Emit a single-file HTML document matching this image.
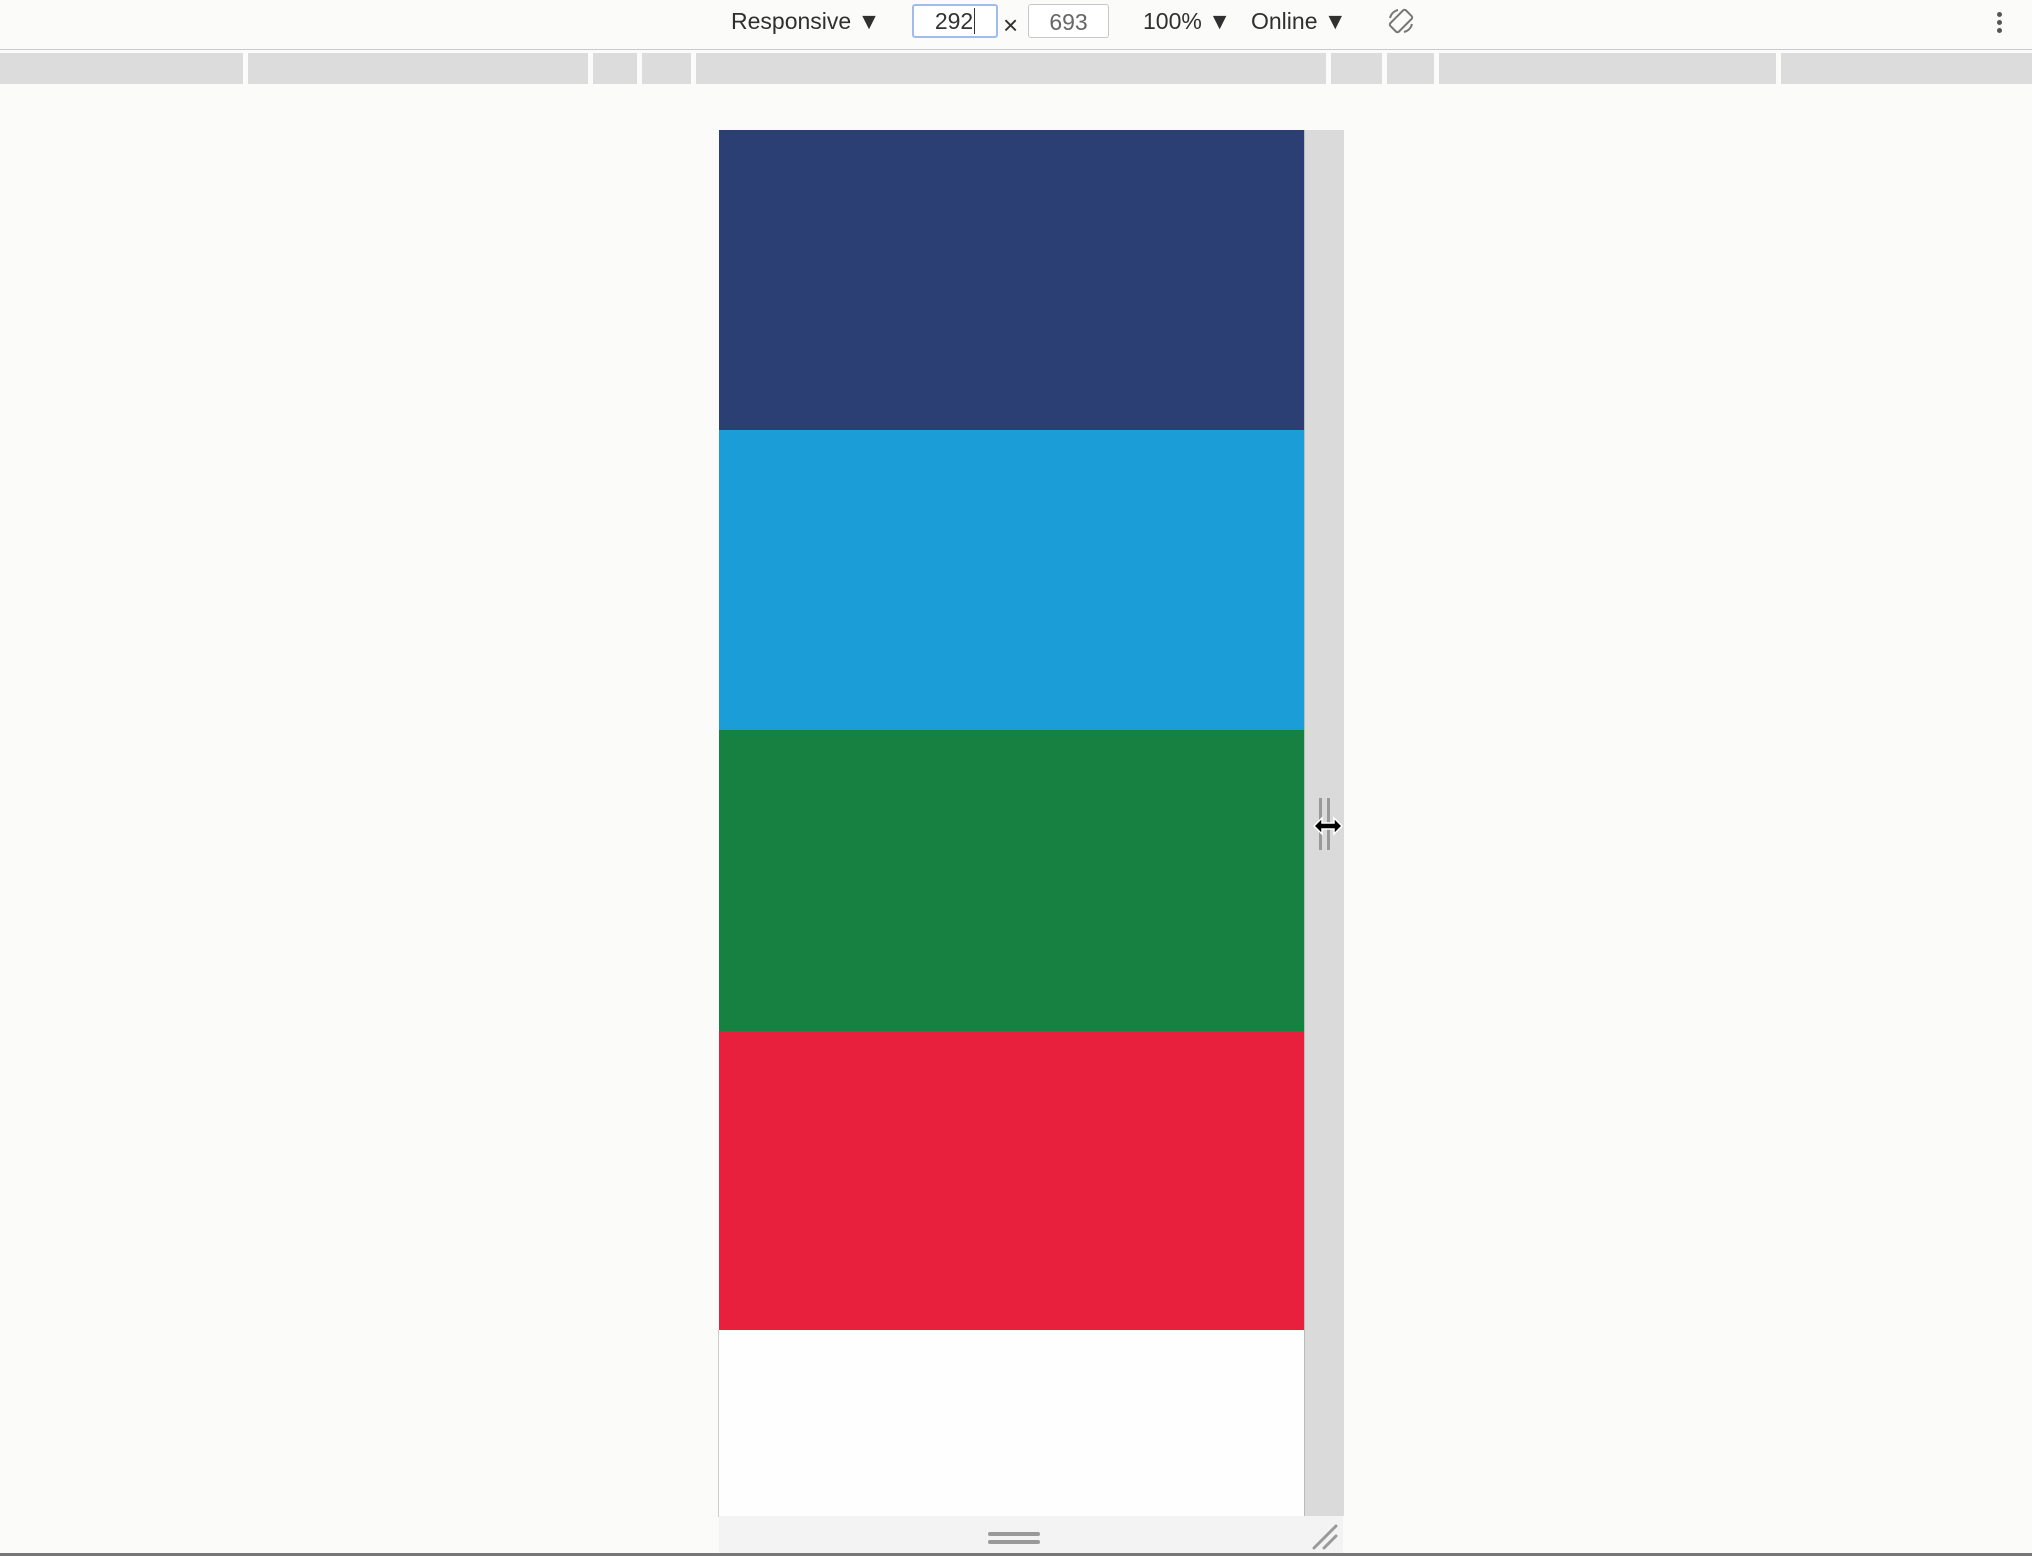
<!DOCTYPE html>
<html><head><meta charset="utf-8"><style>
html,body{margin:0;padding:0}
body{width:2032px;height:1556px;background:#fbfbfa;position:relative;overflow:hidden;font-family:"Liberation Sans",sans-serif;color:#333}
.a{position:absolute}
.t{font-size:23px;top:8px;color:#303030}
.box{position:absolute;top:4px;height:34px;border:1px solid #c8c8c8;border-radius:3px;background:#fff;font-size:23px;text-align:center;line-height:34px;box-sizing:border-box}
.seg{position:absolute;top:53px;height:31px;background:#dcdcdc}
</style></head><body>
<div class="a" style="left:0;top:0;width:2032px;height:49px;background:#fbfbfa;border-bottom:1px solid #c9c9d0"></div>
<div class="a t" style="left:731px">Responsive ▼</div>
<div class="box" style="left:912px;width:86px;border:2px solid #9ebcf0;color:#333;line-height:31px">292<span style="border-left:1px solid #333;margin-left:1px"></span></div>
<div class="a t" style="left:1003px;top:10px;font-size:26px">×</div>
<div class="box" style="left:1028px;width:81px;color:#666">693</div>
<div class="a t" style="left:1143px">100% ▼</div>
<div class="a t" style="left:1251px">Online ▼</div>
<svg class="a" style="left:1386px;top:6px" width="30" height="30" viewBox="0 0 30 30" fill="none" stroke="#777" stroke-width="2"><rect x="9" y="4" width="12" height="22" rx="2" transform="rotate(45 15 15)"/><path d="M4 12a11 11 0 0 1 8-8M26 18a11 11 0 0 1-8 8"/></svg>
<div class="a" style="left:1997px;top:12px;width:5px;height:5px;border-radius:50%;background:#555;box-shadow:0 8px 0 #555,0 16px 0 #555"></div>
<div class="seg" style="left:0;width:243px"></div>
<div class="seg" style="left:248px;width:340px"></div>
<div class="seg" style="left:593px;width:44px"></div>
<div class="seg" style="left:642px;width:49px"></div>
<div class="seg" style="left:696px;width:630px"></div>
<div class="seg" style="left:1331px;width:51px"></div>
<div class="seg" style="left:1387px;width:47px"></div>
<div class="seg" style="left:1439px;width:337px"></div>
<div class="seg" style="left:1781px;width:251px"></div>
<div class="a" style="left:719px;top:130px;width:585px;height:300px;background:#2b3f75"></div>
<div class="a" style="left:719px;top:430px;width:585px;height:300px;background:#1b9dd7"></div>
<div class="a" style="left:719px;top:730px;width:585px;height:301px;background:#168140"></div>
<div class="a" style="left:719px;top:1031px;width:585px;height:299px;background:#e8203d"></div>
<div class="a" style="left:718px;top:1330px;width:586px;height:186px;background:#fefefe;border-left:1px solid #ccc;border-bottom:1px solid #ccc"></div>
<div class="a" style="left:1304px;top:130px;width:39px;height:1386px;background:#dadada;border-left:1px solid #bbb"></div>
<div class="a" style="left:1319px;top:798px;width:3px;height:52px;background:#999"></div>
<div class="a" style="left:1327px;top:798px;width:3px;height:52px;background:#999"></div>
<svg class="a" style="left:1312px;top:816px" width="32" height="20" viewBox="0 0 32 20"><path d="M2 10L10 2V7H22V2L30 10L22 18V13H10V18Z" fill="#000" stroke="#fff" stroke-width="1.5"/></svg>
<div class="a" style="left:719px;top:1516px;width:624px;height:38px;background:#f3f3f3"></div>
<div class="a" style="left:988px;top:1532px;width:52px;height:4px;border-radius:2px;background:#999"></div>
<div class="a" style="left:988px;top:1540px;width:52px;height:4px;border-radius:2px;background:#999"></div>
<svg class="a" style="left:1310px;top:1522px" width="30" height="30"><path d="M4 26L26 4M14 26L26 14" stroke="#999" stroke-width="3" stroke-linecap="round"/></svg>
<div class="a" style="left:0;top:1553px;width:2032px;height:3px;background:#777"></div>
</body></html>
